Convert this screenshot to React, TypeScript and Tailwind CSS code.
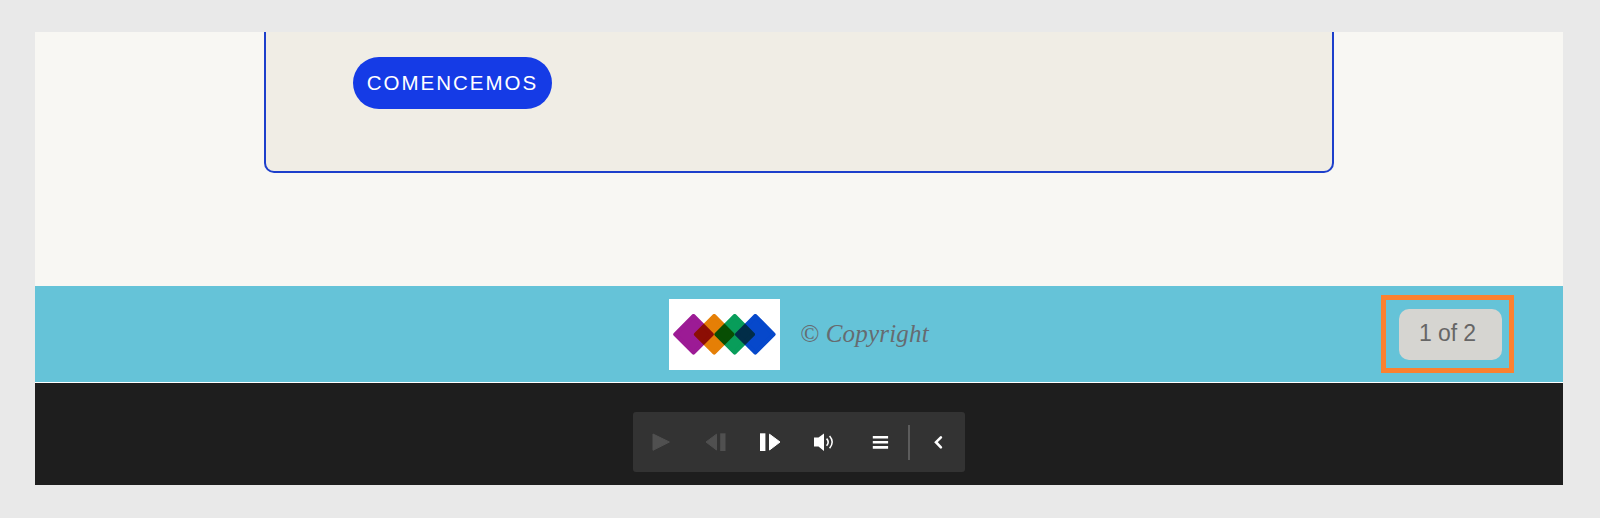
import type { ReactNode } from 'react';

const DIAMONDS = [
  { cx: 24.5, color: '#9c1b95' },
  { cx: 45.2, color: '#e57f06' },
  { cx: 65.7, color: '#089d5a' },
  { cx: 86.3, color: '#0648cb' },
];

function Logo() {
  return (
    <svg width="111" height="71" viewBox="0 0 111 71" className="isolate bg-white">
      {DIAMONDS.map((d) => (
        <path
          key={d.cx}
          d={`M${d.cx} 17l18.3 18.3l-18.3 18.3l-18.3 -18.3z`}
          fill={d.color}
          stroke={d.color}
          strokeWidth="4"
          strokeLinejoin="round"
          className="mix-blend-multiply"
        />
      ))}
    </svg>
  );
}

function ControlButton({ label, disabled, children }: { label: string; disabled?: boolean; children: ReactNode }) {
  return (
    <button
      aria-label={label}
      disabled={disabled}
      className="flex h-full w-[55px] items-center justify-center text-white disabled:text-[#505050]"
    >
      <svg width="25" height="24" viewBox="0 0 25 24" fill="currentColor">
        {children}
      </svg>
    </button>
  );
}

function PlayerControls() {
  return (
    <div className="flex h-[60px] w-[332px] items-center rounded-[3px] bg-[#333333]">
      <ControlButton label="Play" disabled>
        <path d="M5 4L21.4 12L5 20.3z" stroke="currentColor" strokeLinejoin="round" />
      </ControlButton>
      <ControlButton label="Previous" disabled>
        <path d="M13.5 4.2V20L3 12z" stroke="currentColor" strokeLinejoin="round" />
        <path d="M17.2 3.3h5.3V21h-5.3z" />
      </ControlButton>
      <ControlButton label="Next">
        <path d="M2 3.3h5.4V21H2z" />
        <path d="M11.5 4.2V20L22 12z" stroke="currentColor" strokeLinejoin="round" />
      </ControlButton>
      <ControlButton label="Volume">
        <path d="M1 7.6h4.5L11 3.4V21L5.5 16.6H1z" />
        <path d="M13.6 8.6q3.2 3.6 0 7.2" fill="none" stroke="currentColor" strokeWidth="1.6" />
        <path d="M16.6 6q5.2 6 0 12.2" fill="none" stroke="currentColor" strokeWidth="1.5" />
      </ControlButton>
      <ControlButton label="Menu">
        <path d="M4.8 5.9h15.3v2.6H4.8zM4.8 11h15.3v2.6H4.8zM4.8 16.1h15.3v2.6H4.8z" />
      </ControlButton>
      <div className="h-[35px] w-0.5 bg-[#5c5c5c]" />
      <ControlButton label="Collapse">
        <path
          d="M15.9 7.3L11 12.2L15.9 17.3"
          fill="none"
          stroke="currentColor"
          strokeWidth="2.6"
          strokeLinecap="round"
        />
      </ControlButton>
    </div>
  );
}

export default function App() {
  return (
    <div className="h-[518px] w-[1600px] overflow-hidden bg-[#e9e9e9] pt-8 pl-[35px] font-['Liberation_Sans',Arial,sans-serif]">
      <div className="w-[1528px]">
        <main className="h-[254px] bg-[#f8f7f3] pl-[229px]">
          <section className="h-[141px] w-[1070px] rounded-b-[10px] border-2 border-t-0 border-[#1d3fcb] bg-[#f0ede5] pt-[25px] pl-[87px]">
            <button className="flex h-[52px] w-[199px] items-center justify-center rounded-full bg-[#153be6] text-[20.5px] tracking-[2px] text-white">
              COMENCEMOS
            </button>
          </section>
        </main>
        <footer className="flex h-[97px] items-start border-b border-white bg-[#65c3d8]">
          <div className="flex items-center gap-5 pt-[13px] pl-[634px]">
            <Logo />
            <span className="pb-0.5 font-['Georgia','Liberation_Serif',serif] text-[25px] tracking-[0.2px] text-[#666b70] italic">
              © Copyright
            </span>
          </div>
          <div className="mt-[9px] mr-[49px] ml-auto h-[78px] w-[133px] border-5 border-[#fb8130] pt-[9px] pl-[13px]">
            <div className="flex h-[51px] w-[103px] items-center rounded-[10px] bg-[#d6d5d1] pb-[3px] pl-5 text-[23px] tracking-[-0.1px] text-[#666666]">
              1 of 2
            </div>
          </div>
        </footer>
        <div className="flex h-[102px] justify-center bg-[#1e1e1e] pt-[29px]">
          <PlayerControls />
        </div>
      </div>
    </div>
  );
}
